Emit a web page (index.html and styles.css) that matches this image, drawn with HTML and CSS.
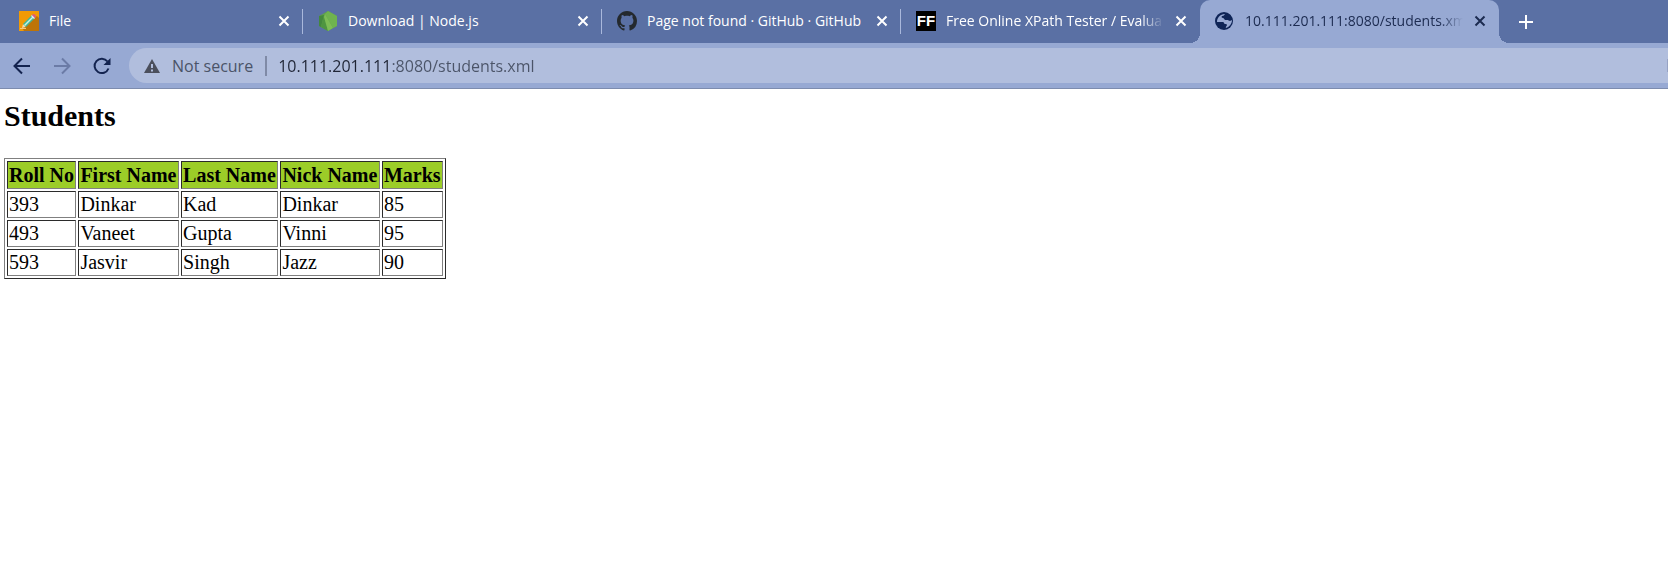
FILE: index.html
```
<!DOCTYPE html>
<html lang="en">
<head>
<meta charset="utf-8">
<title>Students</title>
<link rel="stylesheet" href="styles.css">
</head>
<body>
<header class="browser">
  <nav class="tabs" aria-label="Tabs">
    <div class="tab">
      <svg class="favicon" viewBox="0 0 20 20" aria-hidden="true"><path fill="#f29a05" d="M0 0h20v20H0z"/><path fill="#bd7408" d="M18 5l2 2v13H5l-2-3z"/><path fill="#f7d9a8" d="M3 17l1-4 3 3z"/><path fill="#41b89a" d="M4 13l9-9 3 3-9 9z"/><path fill="#c9f2e2" d="M5 14l9-9 1 1-9 9z"/><path fill="#e6e6f0" d="M12 5l1-1 3 3-1 1z"/><path fill="#e0577b" d="M13 4l1-1q3 0 3 3l-1 1z"/><path stroke="#f9c978" d="M1 17.500h6"/></svg>
      <a class="title" href="#">File</a>
      <button class="close" type="button" aria-label="Close File"><svg viewBox="0 0 12 12"><path d="M1.500 1.500l9 9M10.500 1.500l-9 9"/></svg></button>
    </div>
    <div class="tab">
      <svg class="favicon" viewBox="0 0 20 20" aria-hidden="true"><path fill="#5fa04b" d="M10 0l9 5v10l-9 5-9-5V5z"/><path fill="#6fb34e" d="M10 0l9 5v10l-4 2L7 3z"/><path fill="#43883d" d="M1 5l5-1-3 12-2-1z"/><path fill="#4f9540" d="M6 4L3 16l7 4z"/><path fill="#7dbd55" d="M7 3l8 14-5 3L6 6z"/></svg>
      <a class="title" href="#">Download | Node.js</a>
      <button class="close" type="button" aria-label="Close Download"><svg viewBox="0 0 12 12"><path d="M1.500 1.500l9 9M10.500 1.500l-9 9"/></svg></button>
    </div>
    <div class="tab">
      <svg class="favicon" viewBox="0 0 16 16" aria-hidden="true"><path fill="#24292e" d="M8 0C3.580 0 0 3.580 0 8c0 3.540 2.290 6.530 5.470 7.590.4.070.55-.17.55-.38 0-.19-.01-.82-.01-1.490-2.010.37-2.530-.49-2.690-.94-.09-.23-.48-.94-.82-1.130-.28-.15-.68-.52-.01-.53.63-.01 1.080.58 1.230.82.72 1.210 1.870.87 2.330.66.07-.52.28-.87.51-1.070-1.780-.2-3.640-.89-3.640-3.950 0-.87.31-1.590.82-2.150-.08-.2-.36-1.020.08-2.120 0 0 .67-.21 2.200.82.64-.18 1.320-.27 2-.27s1.360.09 2 .27c1.530-1.040 2.200-.82 2.200-.82.44 1.100.16 1.920.08 2.120.51.56.82 1.270.82 2.150 0 3.070-1.870 3.750-3.650 3.950.29.25.54.73.54 1.480 0 1.070-.01 1.930-.01 2.200 0 .21.15.46.55.38A8.010 8.010 0 0016 8c0-4.420-3.580-8-8-8z"/></svg>
      <a class="title" href="#">Page not found · GitHub · GitHub</a>
      <button class="close" type="button" aria-label="Close GitHub"><svg viewBox="0 0 12 12"><path d="M1.500 1.500l9 9M10.500 1.500l-9 9"/></svg></button>
    </div>
    <div class="tab before-active">
      <span class="favicon monogram" aria-hidden="true">FF</span>
      <a class="title faded" href="#">Free Online XPath Tester / Evalua</a>
      <button class="close" type="button" aria-label="Close XPath Tester"><svg viewBox="0 0 12 12"><path d="M1.500 1.500l9 9M10.500 1.500l-9 9"/></svg></button>
    </div>
    <div class="tab active">
      <svg class="favicon" viewBox="0 0 20 20" aria-hidden="true"><circle cx="9" cy="10" r="9" fill="#0f2557"/><path fill="#97a9d3" d="M10 3c-1 1-1 2-3 2-1 1 0 2 1 2s1 1 2 2h3c1 0 2 1 4 0 0 4-3 7-6 8-1-1 1-2 1-3s-1-1-2-1-1-2-2-2H2c0-4 3-8 8-8z"/><path fill="#0f2557" d="M10 3l3 1c0 2-3 1-3 3s2 1 3 2 2 1 4 0c0-4-3-7-7-7z"/></svg>
      <a class="title faded" href="#" aria-current="page">10.111.201.111:8080/students.xm</a>
      <button class="close" type="button" aria-label="Close students.xml"><svg viewBox="0 0 12 12"><path d="M1.500 1.500l9 9M10.500 1.500l-9 9"/></svg></button>
    </div>
    <button class="new-tab" type="button" aria-label="New tab"><svg viewBox="0 0 16 16"><path d="M8 1v14M1 8h14"/></svg></button>
  </nav>
  <div class="toolbar">
    <button class="nav-button" type="button" aria-label="Back"><svg viewBox="0 0 20 20"><path d="M18 10H3M10 2.500L2.500 10l7.500 7.500"/></svg></button>
    <button class="nav-button disabled" type="button" aria-label="Forward" disabled><svg viewBox="0 0 20 20"><path d="M2 10h15M10 2.500l7.500 7.500-7.500 7.500"/></svg></button>
    <button class="nav-button" type="button" aria-label="Reload"><svg viewBox="0 0 20 20"><path d="M16.500 12.500A7.200 7.200 0 1 1 15.500 5.500"/><path class="solid" d="M18.500 2v7h-7z"/></svg></button>
    <div class="address">
      <svg class="warning" viewBox="0 0 16 14" aria-hidden="true"><path fill="#4b4f5c" d="M8 0l8 14H0z"/><path fill="#b1bedd" d="M7 5h2v4H7zM7 10.500h2v2H7z"/></svg>
      <label class="security" for="url">Not secure</label>
      <input class="url" id="url" type="text" value="10.111.201.111:8080/students.xml" spellcheck="false">
      <span class="action-edge"></span>
    </div>
  </div>
</header>
<main class="page">
  <h2 class="heading">Students</h2>
  <table class="students">
    <thead>
      <tr><th>Roll No</th><th>First Name</th><th>Last Name</th><th>Nick Name</th><th>Marks</th></tr>
    </thead>
    <tbody>
      <tr><td>393</td><td>Dinkar</td><td>Kad</td><td>Dinkar</td><td>85</td></tr>
      <tr><td>493</td><td>Vaneet</td><td>Gupta</td><td>Vinni</td><td>95</td></tr>
      <tr><td>593</td><td>Jasvir</td><td>Singh</td><td>Jazz</td><td>90</td></tr>
    </tbody>
  </table>
</main>
</body>
</html>
```
FILE: styles.css
```
* { box-sizing: border-box; }

body {
  margin: 0;
  background: #fff;
  color: #000;
  font-family: "Liberation Serif", serif;
}

button {
  display: flex;
  align-items: center;
  justify-content: center;
  padding: 0;
  border: 0;
  background: none;
}

button svg {
  fill: none;
  stroke: currentColor;
  stroke-width: 2;
}

.browser { font-family: "Open Sans", "Noto Sans", sans-serif; }

.tabs {
  display: flex;
  height: 43px;
  padding-left: 4px;
  background: #5a70a4;
}

.tab {
  position: relative;
  display: flex;
  flex: 0 1 299px;
  align-items: center;
  min-width: 0;
  padding: 0 10px 1px 15px;
  color: #fff;
}

.tab:not(.active):not(.before-active)::after {
  content: "";
  position: absolute;
  top: 9px;
  right: 0;
  width: 1px;
  height: 25px;
  background: #a9b8dc;
}

.favicon {
  flex: none;
  width: 20px;
  height: 20px;
}

.monogram {
  background: #000;
  color: #fff;
  font: bold 15px/20px "Liberation Sans", sans-serif;
  text-align: center;
}

.title {
  flex: 1;
  min-width: 0;
  margin: 0 8px 0 10px;
  overflow: hidden;
  color: inherit;
  font-size: 14px;
  line-height: 22px;
  text-decoration: none;
  white-space: nowrap;
}

.faded { mask-image: linear-gradient(to right, #000 calc(100% - 24px), transparent); }

.close {
  flex: none;
  width: 18px;
  height: 18px;
  color: inherit;
}

.close svg { width: 12px; height: 12px; }

.active {
  border-radius: 10px 10px 0 0;
  background: #97a9d3;
  color: #1c2b50;
}

.active::before,
.active::after {
  content: "";
  position: absolute;
  bottom: 0;
  width: 10px;
  height: 10px;
}

.active::before {
  right: 100%;
  background: radial-gradient(circle at 0 0, transparent 10px, #97a9d3 10px);
}

.active::after {
  left: 100%;
  background: radial-gradient(circle at 100% 0, transparent 10px, #97a9d3 10px);
}

.new-tab {
  width: 32px;
  margin-left: 11px;
  color: #fff;
}

.new-tab svg { width: 16px; height: 16px; }

.toolbar {
  display: flex;
  align-items: center;
  gap: 20px;
  height: 46px;
  padding-left: 12px;
  border-bottom: 1px solid #7d8cae;
  background: #97a9d3;
}

.nav-button {
  width: 20px;
  height: 20px;
  color: #13234f;
}

.nav-button svg { width: 20px; height: 20px; }
.nav-button .solid { fill: currentColor; stroke: none; }
.disabled { color: #6b7ba6; }

.address {
  display: flex;
  flex: 1;
  align-items: center;
  height: 35px;
  margin-left: -3px;
  padding-left: 15px;
  border-radius: 18px 0 0 18px;
  background: #b1bedd;
  font-size: 16px;
  line-height: 24px;
}

.warning { flex: none; width: 16px; height: 14px; }

.security {
  margin-left: 12px;
  padding-right: 12px;
  border-right: 2px solid #7f8aa6;
  color: #4b5468;
  line-height: 20px;
}

.url {
  flex: 1;
  min-width: 0;
  margin-left: 11px;
  padding: 0;
  border: 0;
  outline: 0;
  background: linear-gradient(to right, #1f2536 113px, #4b5468 113px) text;
  color: transparent;
  font: inherit;
}

.action-edge { width: 1px; height: 13px; background: #97a3c4; }

.page { padding: 9px 4px; }

.heading {
  margin: 0 0 25px;
  font-size: 30px;
  line-height: 35px;
}

.students {
  width: 442px;
  border: 1px solid;
  border-color: #808080 #2b2b2b #2b2b2b #808080;
  border-spacing: 2px;
  font-size: 20px;
}

.students th,
.students td {
  padding: 1px;
  border: 1px solid;
  border-color: #2b2b2b #808080 #808080 #2b2b2b;
  line-height: 23px;
  text-align: left;
}

.students th { padding-top: 2px; background: #9ccd28; }
```
